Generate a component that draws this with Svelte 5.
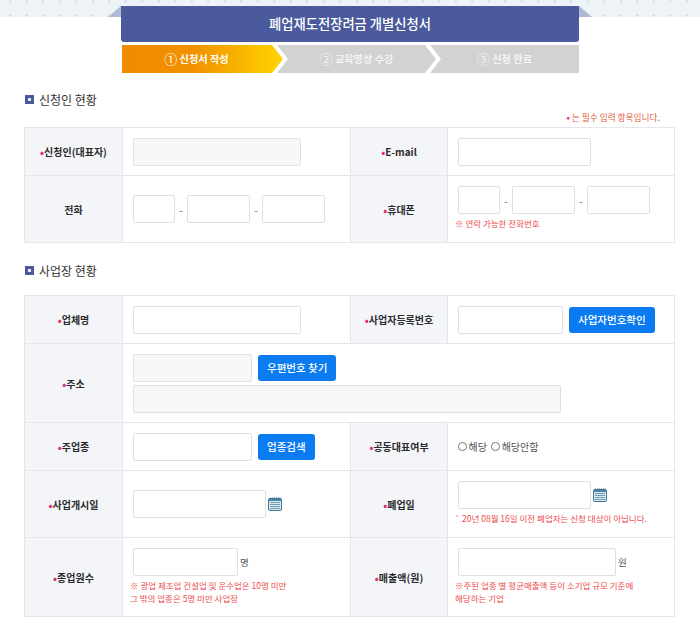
<script>
	const steps = [
		{ no: '①', label: '신청서 작성' },
		{ no: '②', label: '교육영상 수강' },
		{ no: '③', label: '신청 완료' }
	];
</script>

{#snippet calendar()}
	<svg class="cal" width="14" height="14" viewBox="0 0 14 14">
		<rect x="0.5" y="1.5" width="13" height="12" rx="1.5" fill="#dbe9f1" stroke="#3f7595" />
		<rect x="1" y="2" width="12" height="2" fill="#4f86a6" />
		<path d="M2.5 0.5v2M4.5 0.5v2M6.5 0.5v2M8.5 0.5v2M10.5 0.5v2M12 0.5v2" stroke="#3f7595" stroke-width="1" />
		<path d="M2 5.5h10M2 7.5h10M2 9.5h10M2 11.5h10" stroke="#6f9cb6" stroke-width="1" />
	</svg>
{/snippet}

<header>
	<h1>폐업재도전장려금 개별신청서</h1>
	<ol class="steps">
		{#each steps as s, i}
			<li class:on={i === 0}><span class="no">{s.no}</span> {s.label}</li>
		{/each}
	</ol>
</header>

<main>
	<h2 class="first"><i></i>신청인 현황</h2>
	<p class="req"><b>•</b> 는 필수 입력 항목입니다.</p>
	<table>
		<colgroup><col class="l" /><col class="a" /><col class="l2" /><col class="b" /></colgroup>
		<tbody>
			<tr class="r48">
				<th><b>•</b>신청인(대표자)</th>
				<td><input class="w168 ro" readonly /></td>
				<th><b>•</b>E-mail</th>
				<td><input class="w133" /></td>
			</tr>
			<tr class="r67">
				<th>전화</th>
				<td>
					<div class="tel">
						<input class="w42" /><span>-</span><input class="w63" /><span>-</span><input class="w63" />
					</div>
				</td>
				<th><b>•</b>휴대폰</th>
				<td class="noted">
					<div class="tel">
						<input class="w42" /><span>-</span><input class="w63" /><span>-</span><input class="w63" />
					</div>
					<p class="note">※ 연락 가능한 전화번호</p>
				</td>
			</tr>
		</tbody>
	</table>

	<h2><i></i>사업장 현황</h2>
	<table>
		<colgroup><col class="l" /><col class="a" /><col class="l2" /><col class="b" /></colgroup>
		<tbody>
			<tr class="r48">
				<th><b>•</b>업체명</th>
				<td><input class="w168" /></td>
				<th><b>•</b>사업자등록번호</th>
				<td>
					<div class="row">
						<input class="w105" /><button>사업자번호확인</button>
					</div>
				</td>
			</tr>
			<tr class="r79">
				<th><b>•</b>주소</th>
				<td colspan="3">
					<div class="row">
						<input class="w119 ro" readonly /><button>우편번호 찾기</button>
					</div>
					<input class="w428 ro addr" readonly />
				</td>
			</tr>
			<tr class="r48">
				<th><b>•</b>주업종</th>
				<td>
					<div class="row">
						<input class="w119" /><button>업종검색</button>
					</div>
				</td>
				<th><b>•</b>공동대표여부</th>
				<td>
					<label class="radio"><input type="radio" name="co" />해당</label>
					<label class="radio"><input type="radio" name="co" />해당안함</label>
				</td>
			</tr>
			<tr class="r67">
				<th><b>•</b>사업개시일</th>
				<td>
					<div class="row tight"><input class="w133" />{@render calendar()}</div>
				</td>
				<th><b>•</b>폐업일</th>
				<td class="noted">
					<div class="row tight"><input class="w133" />{@render calendar()}</div>
					<p class="note">` 20년 08월 16일 이전 폐업자는 신청 대상이 아닙니다.</p>
				</td>
			</tr>
			<tr class="r79">
				<th><b>•</b>종업원수</th>
				<td class="noted">
					<div class="row tight"><input class="w105" /><span class="unit">명</span></div>
					<p class="note">※ 광업 제조업 건설업 및 운수업은 10명 미만<br />그 밖의 업종은 5명 미만 사업장</p>
				</td>
				<th><b>•</b>매출액(원)</th>
				<td class="noted">
					<div class="row tight"><input class="w158" /><span class="unit">원</span></div>
					<p class="note">※주된 업종 별 평균매출액 등이 소기업 규모 기준에<br />해당하는 기업</p>
				</td>
			</tr>
		</tbody>
	</table>
</main>

<style>
	:global(body) {
		background: #fff;
		font-family: "Noto Sans CJK KR", "Noto Sans", sans-serif;
		color: #333;
	}

	header {
		padding-top: 6px;
		background:
			radial-gradient(circle, #d3dde8 1px, transparent 1.5px) 2px 0 / 16.5px 3px repeat-x,
			radial-gradient(circle, #d3dde8 1px, transparent 1.5px) 2px 14px / 16.5px 3px repeat-x,
			linear-gradient(#eef3f8, #eef3f8) 0 0 / 100% 17px no-repeat;
	}

	h1 {
		position: relative;
		width: 458px;
		height: 36px;
		margin: 0 auto;
		border-radius: 0 0 3px 3px;
		background: #4a5a9c;
		color: #fff;
		font-size: 13.3px;
		font-weight: 500;
		line-height: 35px;
		text-align: center;
	}

	h1::before,
	h1::after {
		content: "";
		position: absolute;
		top: 0;
		width: 0;
		height: 0;
		border-bottom: 11px solid #b1b9d4;
	}

	h1::before {
		left: -13px;
		border-left: 13px solid transparent;
	}

	h1::after {
		right: -13px;
		border-right: 13px solid transparent;
	}

	.steps {
		display: flex;
		width: 457px;
		height: 28px;
		margin: 3px auto 0 122px;
		padding: 0;
		list-style: none;
	}

	.steps li {
		flex: none;
		width: 159px;
		margin-right: -6px;
		background: #d2d2d2;
		clip-path: polygon(0 0, calc(100% - 11px) 0, 100% 50%, calc(100% - 11px) 100%, 0 100%, 11px 50%);
		color: #f4f4f4;
		font-size: 10.2px;
		font-weight: 700;
		line-height: 28px;
		text-align: center;
	}

	.steps li:first-child {
		box-sizing: border-box;
		width: 161px;
		padding-right: 12px;
		clip-path: polygon(0 0, calc(100% - 11px) 0, 100% 50%, calc(100% - 11px) 100%, 0 100%);
	}

	.steps li:last-child {
		width: 149px;
		margin-right: 0;
		clip-path: polygon(0 0, 100% 0, 100% 100%, 0 100%, 11px 50%);
	}

	.steps li.on {
		background: linear-gradient(90deg, #f08a00 0%, #f29200 45%, #ffd500 100%);
		color: #fff;
	}

	.no {
		font-size: 13px;
		font-weight: 400;
		vertical-align: -1px;
	}

	main {
		padding: 0 25px 0;
	}

	h2 {
		display: flex;
		align-items: center;
		gap: 5px;
		height: 18px;
		margin: 18px 0 16px;
		color: #333;
		font-size: 12px;
		font-weight: 400;
	}

	h2.first {
		margin: 17px 0 0;
	}

	h2 i {
		box-sizing: border-box;
		width: 9px;
		height: 9px;
		border: 3px solid #4a5a9c;
		background: #e8ebf5;
	}

	.req {
		margin: 3px 15px 2px 0;
		color: #e4603f;
		font-size: 8.7px;
		line-height: 14px;
		text-align: right;
	}

	b {
		color: #e0307c;
	}

	table {
		width: 650px;
		margin-left: -1px;
		border-collapse: collapse;
		table-layout: fixed;
		border: 1px solid #e4e6ea;
	}

	col.l { width: 98px; }
	col.l2 { width: 97px; }
	col.a { width: 228px; }
	col.b { width: 227px; }

	.r48 { height: 48px; }
	.r67 { height: 67px; }
	.r79 { height: 79px; }

	th,
	td {
		padding: 0 10px;
		border: 1px solid #e4e6ea;
		font-size: 10px;
		vertical-align: middle;
	}

	td.noted {
		padding-bottom: 2px;
	}

	th {
		padding: 0;
		background: #f3f5f9;
		color: #2b2b2b;
		font-weight: 700;
		text-align: center;
	}

	input:not([type="radio"]) {
		display: block;
		box-sizing: border-box;
		height: 28px;
		margin: 0;
		padding: 0;
		border: 1px solid #dfe0e2;
		border-radius: 2px;
		background: #fff;
		flex: none;
	}

	input.ro { background: #f8f8f8; }
	.w42 { width: 42px; }
	.w63 { width: 63px; }
	.w105 { width: 105px; }
	.w119 { width: 119px; }
	.w133 { width: 133px; }
	.w158 { width: 158px; }
	.w168 { width: 168px; }
	.w428 { width: 428px; }

	.addr { margin-top: 3px !important; }

	.row,
	.tel {
		display: flex;
		align-items: center;
	}

	.row { gap: 6px; }
	.row.tight { gap: 2px; }
	.tel span { width: 12px; color: #666; text-align: center; }

	button {
		height: 26px;
		padding: 0 9px;
		border: 0;
		border-radius: 3px;
		background: #0b7bf2;
		color: #fff;
		font: 500 10.5px "Noto Sans CJK KR", sans-serif;
	}

	.note {
		margin: 3px 0 0 -3px;
		color: #ee4b4b;
		font-size: 8.5px;
		line-height: 13px;
	}

	.unit { color: #555; font-size: 9.5px; }

	.radio {
		display: inline-flex;
		align-items: center;
		gap: 2px;
		margin-right: 2px;
		color: #555;
		font-size: 10px;
	}

	.radio input {
		appearance: none;
		box-sizing: border-box;
		width: 8.5px;
		height: 8.5px;
		margin: 0;
		border: 1px solid #777;
		border-radius: 50%;
		background: #fff;
	}
</style>
